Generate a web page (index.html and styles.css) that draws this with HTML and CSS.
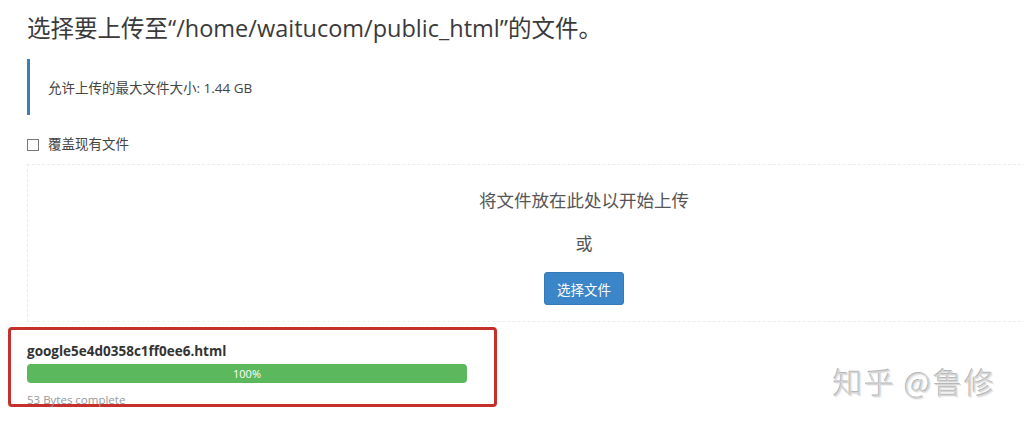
FILE: index.html
```html
<!DOCTYPE html>
<html lang="zh-CN">
<head>
<meta charset="utf-8">
<title>上传文件</title>
<link rel="stylesheet" href="styles.css">
</head>
<body>
<div class="page">
  <h1 class="title">选择要上传至“/home/waitucom/public_html”的文件。</h1>
  <div class="info">允许上传的最大文件大小: 1.44 GB</div>
  <label class="opt"><span class="box"></span><span class="opt-label">覆盖现有文件</span></label>
  <div class="drop">
    <div class="drop-text">将文件放在此处以开始上传</div>
    <div class="drop-or">或</div>
    <button class="btn">选择文件</button>
  </div>
  <div class="upload">
    <div class="fname">google5e4d0358c1ff0ee6.html</div>
    <div class="bar"><div class="fill" style="width:100%">100%</div></div>
    <div class="status">53 Bytes complete</div>
  </div>
  <div class="mark">知乎 @鲁修</div>
</div>
</body>
</html>
```
FILE: styles.css
```css
html, body {
  margin: 0;
  padding: 0;
  background: #fff;
}
body {
  font-family: "Open Sans", "Noto Sans CJK SC", sans-serif;
  color: #333;
}
.page {
  position: relative;
  width: 1024px;
  height: 424px;
  overflow: hidden;
  padding-left: 27px;
  box-sizing: border-box;
}
.title {
  margin: 0;
  padding-top: 12px;
  font-size: 23.5px;
  line-height: 32px;
  font-weight: 400;
  color: #3a3a3a;
  white-space: nowrap;
}
.info {
  margin-top: 15px;
  height: 56px;
  border-left: 3px solid #3c7db3;
  padding-left: 18px;
  display: flex;
  align-items: center;
  font-size: 13.5px;
  color: #444;
}
.opt {
  margin-top: 24px;
  height: 12px;
  display: flex;
  align-items: center;
  gap: 9px;
  font-size: 13.5px;
  color: #444;
}
.opt-label {
  line-height: 12px;
  position: relative;
  top: -1px;
}
.box {
  width: 10px;
  height: 10px;
  border: 1px solid #777;
  background: #fff;
}
.drop {
  margin-top: 13px;
  width: 1114px;
  height: 158px;
  box-sizing: border-box;
  border: 1px dashed #ececec;
  padding-top: 23px;
  display: flex;
  flex-direction: column;
  align-items: center;
}
.drop-text {
  font-size: 17.5px;
  line-height: 24px;
  color: #555;
}
.drop-or {
  margin-top: 20px;
  font-size: 17px;
  line-height: 24px;
  color: #555;
}
.btn {
  margin-top: 16px;
  width: 80px;
  height: 33px;
  border: 1px solid #3479b8;
  border-radius: 3px;
  background: #3a86c8;
  color: #fff;
  font-family: "Open Sans", "Noto Sans CJK SC", sans-serif;
  font-size: 13.5px;
  padding: 0;
}
.upload {
  margin-top: 5px;
  margin-left: -19px;
  width: 489px;
  height: 80px;
  box-sizing: border-box;
  border: 3px solid #c6302c;
  border-radius: 4px;
  padding: 12px 0 0 16px;
}
.fname {
  font-size: 13.5px;
  line-height: 18px;
  font-weight: 700;
  color: #333;
}
.bar {
  margin-top: 4px;
  width: 440px;
  height: 19px;
  border-radius: 4px;
  background: #eee;
  overflow: hidden;
}
.fill {
  height: 100%;
  background: #5cb85c;
  color: #fff;
  font-size: 11px;
  line-height: 19px;
  text-align: center;
}
.status {
  margin-top: 9px;
  font-size: 11.5px;
  line-height: 16px;
  color: #999;
}
.mark {
  position: absolute;
  left: 833px;
  top: 362px;
  font-family: "Noto Sans CJK SC", sans-serif;
  font-size: 30px;
  font-weight: 300;
  line-height: 38px;
  color: #d6d6d6;
  letter-spacing: 1.5px;
  white-space: nowrap;
  text-shadow: -1px -1px 0 #b8b8b8, 1px 1px 0 #f2f2f2;
}
```
